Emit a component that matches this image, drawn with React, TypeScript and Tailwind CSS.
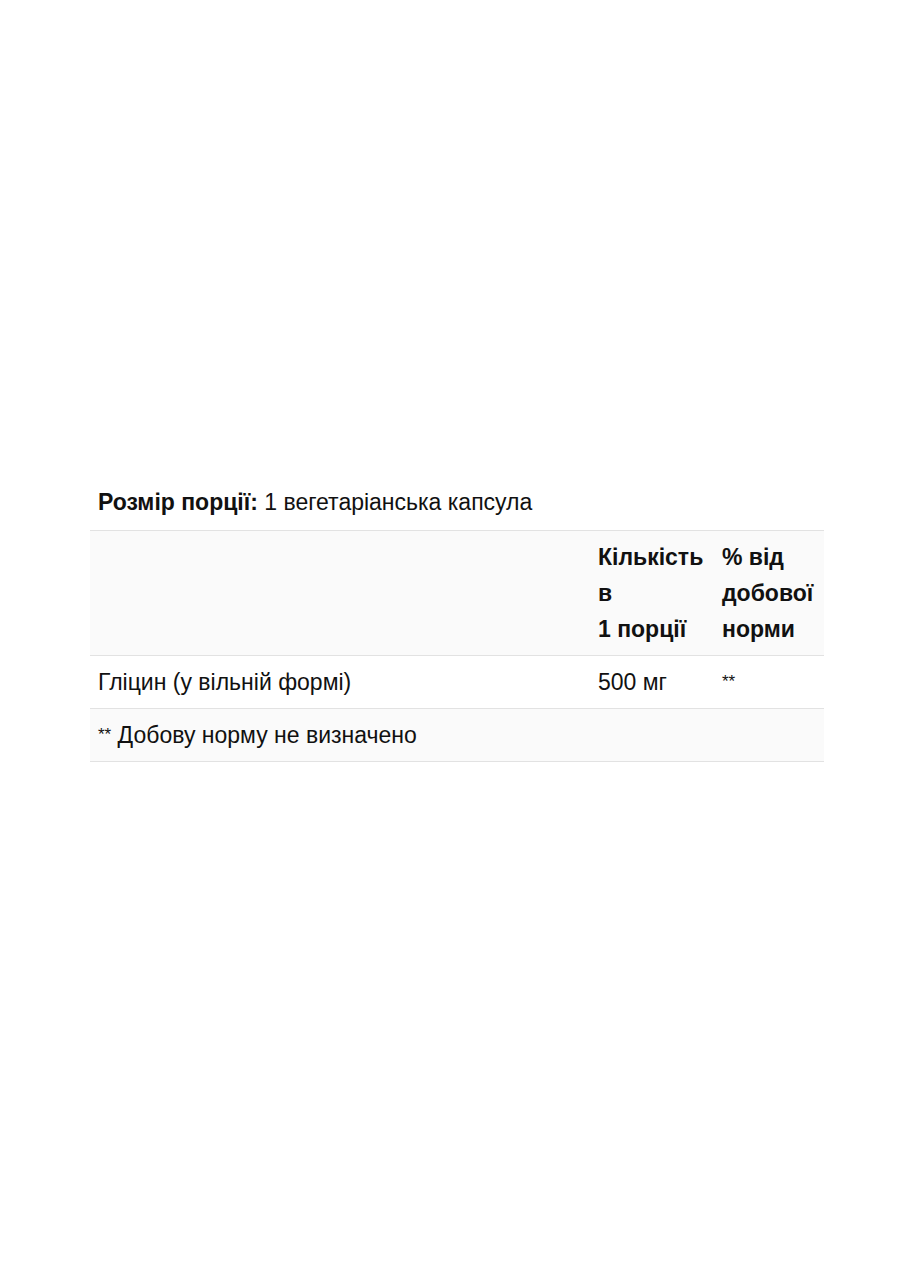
export default function App() {
  return (
    <div
      className="flex min-h-[1280px] w-full flex-col bg-white pt-[484px] text-[#111]"
      style={{ fontFamily: '"Liberation Sans", Arial, sans-serif' }}
    >
      <div className="mx-[90px]">
        <p className="px-2 text-[23px] leading-[36px]">
          <span className="font-bold">Розмір порції:</span> 1 вегетаріанська капсула
        </p>
        <table className="mt-[10px] w-[734px] table-fixed border-collapse text-[23px] leading-[36px]">
          <colgroup>
            <col className="w-[500px]" />
            <col className="w-[124px]" />
            <col className="w-[110px]" />
          </colgroup>
          <thead>
            <tr className="border-y border-[#e2e2e2] bg-[#fafafa] align-top font-bold">
              <th className="px-2 py-2"></th>
              <th className="px-2 py-2 text-left">
                Кількість
                <br />в<br />1&nbsp;порції
              </th>
              <th className="px-2 py-2 text-left">
                %&nbsp;від
                <br />
                добової
                <br />
                норми
              </th>
            </tr>
          </thead>
          <tbody>
            <tr className="border-b border-[#e2e2e2] align-top">
              <td className="px-2 py-2">Гліцин (у вільній формі)</td>
              <td className="px-2 py-2">500 мг</td>
              <td className="px-2 py-2 text-[17px]">**</td>
            </tr>
            <tr className="border-b border-[#e2e2e2] bg-[#fafafa]">
              <td colSpan={3} className="px-2 py-2">
                <span className="align-top text-[17px]">**</span> Добову норму не визначено
              </td>
            </tr>
          </tbody>
        </table>
      </div>
    </div>
  );
}
